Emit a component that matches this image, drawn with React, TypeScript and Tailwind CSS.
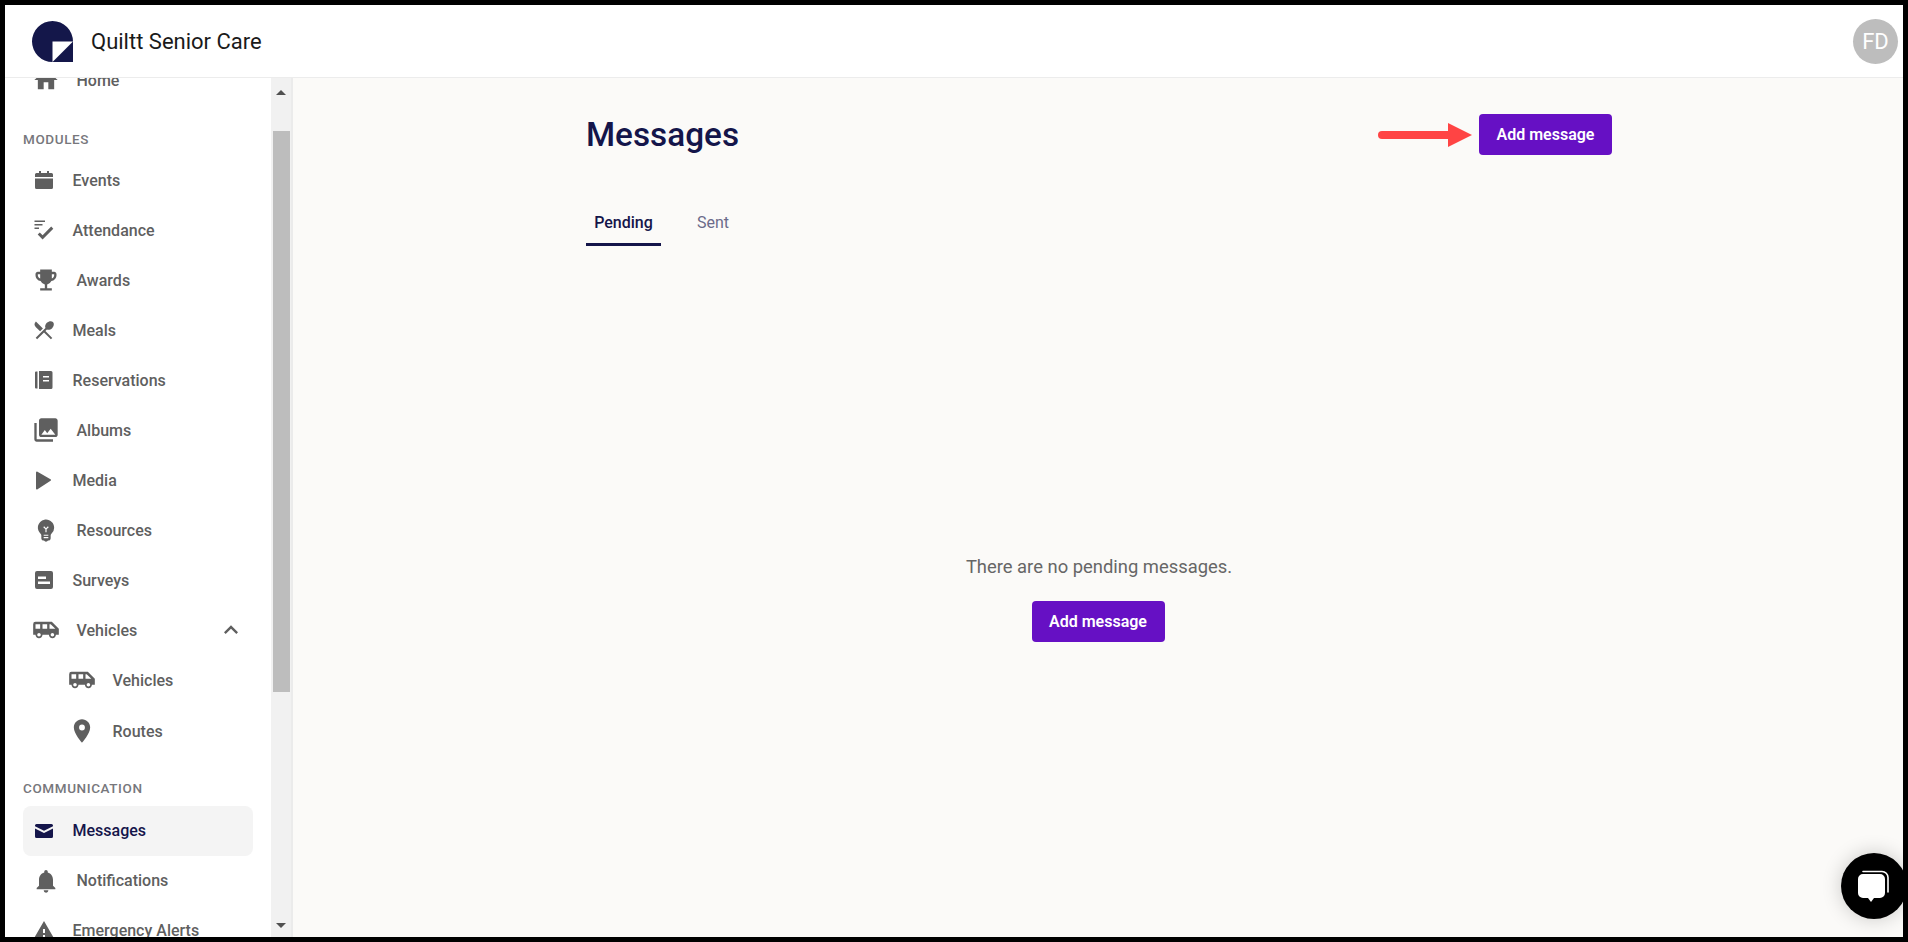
import type { ReactNode } from "react"
import {
  MdAirportShuttle,
  MdEmojiEvents,
  MdEmojiObjects,
  MdExpandLess,
  MdHome,
  MdNotifications,
  MdPhotoLibrary,
  MdPlace,
  MdRestaurantMenu,
  MdWarning,
} from "react-icons/md"

// Icons the material set doesn't have in this exact shape
const EventsIcon = () => (
  <svg viewBox="0 0 24 24" className="h-6 w-6 shrink-0 fill-current">
    <path d="M7 3h2v2h6V3h2v2h2.5A1.5 1.5 0 0 1 21 6.5V9H3V6.5A1.5 1.5 0 0 1 4.5 5H7V3ZM3 10.5h18v9a1.5 1.5 0 0 1-1.5 1.5h-15A1.5 1.5 0 0 1 3 19.5v-9Z" />
  </svg>
)

const AttendanceIcon = () => (
  <svg viewBox="0 0 24 24" className="h-6 w-6 shrink-0 fill-current">
    <path d="M2.5 2.5h10.5v1.4H2.5zM2.5 6h8v1.4h-8zM2.5 9.5h4.5v1.4H2.5zM10.6 21.4l-4.9-4.9 2.1-2.1 2.8 2.8 8.6-8.6 2.1 2.1z" />
  </svg>
)

const ReservationsIcon = () => (
  <svg viewBox="0 0 24 24" className="h-6 w-6 shrink-0 fill-current">
    <path
      fillRule="evenodd"
      d="M4 3.5h1.5v17H4a1 1 0 0 1-1-1v-15a1 1 0 0 1 1-1ZM7 3h12a1.5 1.5 0 0 1 1.5 1.5v15A1.5 1.5 0 0 1 19 21H7V3Zm4 5v1.5h6V8h-6Zm0 4v1.5h6V12h-6Z"
    />
  </svg>
)

const MediaIcon = () => (
  <svg viewBox="0 0 24 24" className="h-6 w-6 shrink-0 fill-current">
    <path d="M5 4.5 18 12 5 20.5Z" stroke="currentColor" strokeWidth="2" strokeLinejoin="round" />
  </svg>
)

const SurveysIcon = () => (
  <svg viewBox="0 0 24 24" className="h-6 w-6 shrink-0 fill-current">
    <path
      fillRule="evenodd"
      d="M5 3h14a2 2 0 0 1 2 2v14a2 2 0 0 1-2 2H5a2 2 0 0 1-2-2V5a2 2 0 0 1 2-2Zm1 5.5V11h8V8.5H6Zm0 5V16h12v-2.5H6Z"
    />
  </svg>
)

const EnvelopeIcon = () => (
  <svg viewBox="0 0 24 24" className="h-6 w-6 shrink-0 fill-current">
    <path d="M4.5 5h15A1.5 1.5 0 0 1 21 6.5v.7l-9 4.6-9-4.6v-.7A1.5 1.5 0 0 1 4.5 5ZM3 9.4l9 4.6 9-4.6v8.1a1.5 1.5 0 0 1-1.5 1.5h-15A1.5 1.5 0 0 1 3 17.5V9.4Z" />
  </svg>
)

type Item = {
  label: string
  icon: ReactNode
  active?: boolean
  flush?: boolean
}

const big = "h-7 w-7 shrink-0"

const modules: Item[] = [
  { label: "Events", icon: <EventsIcon /> },
  { label: "Attendance", icon: <AttendanceIcon /> },
  { label: "Awards", icon: <MdEmojiEvents className={big} /> },
  { label: "Meals", icon: <MdRestaurantMenu className="h-6 w-6 shrink-0" /> },
  { label: "Reservations", icon: <ReservationsIcon /> },
  { label: "Albums", icon: <MdPhotoLibrary className={big} /> },
  { label: "Media", icon: <MediaIcon /> },
  { label: "Resources", icon: <MdEmojiObjects className={big} /> },
  { label: "Surveys", icon: <SurveysIcon /> },
]

const communication: Item[] = [
  { label: "Messages", icon: <EnvelopeIcon />, active: true, flush: true },
  { label: "Notifications", icon: <MdNotifications className={big} />, flush: true },
  { label: "Emergency Alerts", icon: <MdWarning className="h-6 w-6 shrink-0" />, flush: true },
]

function NavRow({ label, icon, active, flush }: Item) {
  return (
    <div
      className={`flex h-[50px] w-[230px] shrink-0 items-center gap-[16.5px] rounded-lg pl-[9px] text-base font-medium ${
        active ? "bg-[#f4f4f4] text-[#14154a]" : "text-[#5f5f5f]"
      }`}
    >
      {icon}
      <span className={flush ? "" : "pt-px"}>{label}</span>
    </div>
  )
}

function SectionLabel({ children }: { children: ReactNode }) {
  return <div className="flex h-[18px] items-center text-[13.5px] font-medium tracking-[0.6px] text-[#77777c]">{children}</div>
}

function AddButton() {
  return <button className="h-[41px] w-[133px] rounded bg-[#6610c4] text-base font-semibold text-white">Add message</button>
}

function Sidebar() {
  return (
    <aside className="flex w-[288px] shrink-0 overflow-hidden border-r-2 border-[#ebebeb] bg-white">
      <nav className="flex w-[266px] shrink-0 flex-col pl-[18px] -mt-[23px]">
        <NavRow label="Home" icon={<MdHome className={big} />} />
        <div className="mt-[25px] mb-[7px]">
          <SectionLabel>MODULES</SectionLabel>
        </div>
        {modules.map((m) => (
          <NavRow key={m.label} {...m} />
        ))}
        <div className="flex w-[230px] items-center justify-between">
          <NavRow label="Vehicles" icon={<MdAirportShuttle className={big} />} />
          <MdExpandLess className="-ml-[44px] mr-2 h-7 w-7 shrink-0 text-[#5f5f5f]" />
        </div>
        <div className="pl-9">
          <NavRow label="Vehicles" icon={<MdAirportShuttle className={big} />} />
        </div>
        <div className="mt-px pl-9">
          <NavRow label="Routes" icon={<MdPlace className={big} />} />
        </div>
        <div className="mt-[23px] mb-[9px]">
          <SectionLabel>COMMUNICATION</SectionLabel>
        </div>
        {communication.map((m) => (
          <NavRow key={m.label} {...m} />
        ))}
      </nav>
      <div className="flex w-5 shrink-0 flex-col bg-[#f1f1f1]">
        <div className="flex h-[17px] items-end justify-center">
          <svg viewBox="0 0 10 5" className="h-[5px] w-[10px] fill-[#505050]">
            <path d="M5 0 10 5H0Z" />
          </svg>
        </div>
        <div className="mt-[36px] mr-px ml-[2px] h-[561px] bg-[#bdbdbd]" />
        <div className="mt-auto flex h-[14px] items-start justify-center">
          <svg viewBox="0 0 10 5" className="h-[5px] w-[10px] fill-[#505050]">
            <path d="M5 5 10 0H0Z" />
          </svg>
        </div>
      </div>
    </aside>
  )
}

export default function App() {
  return (
    <div className="relative flex h-[942px] flex-col overflow-hidden bg-black p-[5px] font-['Roboto',sans-serif]">
      <header className="flex h-[73px] shrink-0 items-center justify-between border-b border-[#ececec] bg-white pl-[27px] pr-[5px]">
        <div className="flex items-center gap-[18px]">
          <svg viewBox="0 0 41 41" className="h-[41px] w-[41px]">
            <path d="M20.5 0A20.5 20.5 0 0 1 41 20.5V41H20.5A20.5 20.5 0 0 1 20.5 0Z" fill="#14174a" />
            <path d="M20.5 41V20.5H41Z" fill="#ffffff" />
          </svg>
          <span className="text-[22px] text-[#1a1a1a]">Quiltt Senior Care</span>
        </div>
        <div className="flex h-[45px] w-[45px] items-center justify-center rounded-full bg-[#bdbdbd] text-[22px] text-white">
          FD
        </div>
      </header>
      <div className="flex min-h-0 flex-1">
        <Sidebar />
        <main className="flex-1 bg-[#fbfaf8]">
          <div className="ml-[293px] flex w-[1026px] flex-col">
            <div className="flex h-[77px] items-end justify-between">
              <h1 className="mb-[-4px] text-[33.3px] leading-[48px] font-medium text-[#14154a]">Messages</h1>
              <div className="flex items-center gap-[7px]">
                <svg viewBox="0 0 94 24" className="h-6 w-[94px]">
                  <path d="M4 12H72" stroke="#ff4444" strokeWidth="8" strokeLinecap="round" />
                  <path d="M70 0 94 12 70 24Z" fill="#ff4444" />
                </svg>
                <AddButton />
              </div>
            </div>
            <div className="mt-[46px] flex text-base">
              <div className="flex h-[45px] w-[75px] items-center justify-center border-b-[3px] border-[#14154a] pt-px font-medium text-[#14154a]">
                Pending
              </div>
              <div className="ml-9 flex h-[45px] items-center pb-[1px] text-[#6b6b8a]">Sent</div>
            </div>
            <div className="mt-[308px] flex flex-col items-center">
              <p className="text-[18.4px] leading-[26px] text-[#666666]">There are no pending messages.</p>
              <div className="mt-[21px] mr-0.5">
                <AddButton />
              </div>
            </div>
          </div>
        </main>
      </div>
      {/* chat launcher sits over the page corner */}
      <div className="absolute top-[853px] left-[1841px] flex h-[66px] w-[66px] items-center justify-center rounded-full bg-black shadow-[0_0_20px_rgba(0,0,0,0.2)]">
        <svg viewBox="0 0 36 36" className="h-9 w-9">
          <path d="M7 3.5h19a6 6 0 0 1 6 6V24" fill="none" stroke="#ffffff" strokeWidth="1.6" strokeLinecap="round" />
          <path d="M7 6h17a5 5 0 0 1 5 5v14a5 5 0 0 1-5 5h-6l-3 4-3-4H7a5 5 0 0 1-5-5V11a5 5 0 0 1 5-5Z" fill="#ffffff" />
        </svg>
      </div>
    </div>
  )
}
